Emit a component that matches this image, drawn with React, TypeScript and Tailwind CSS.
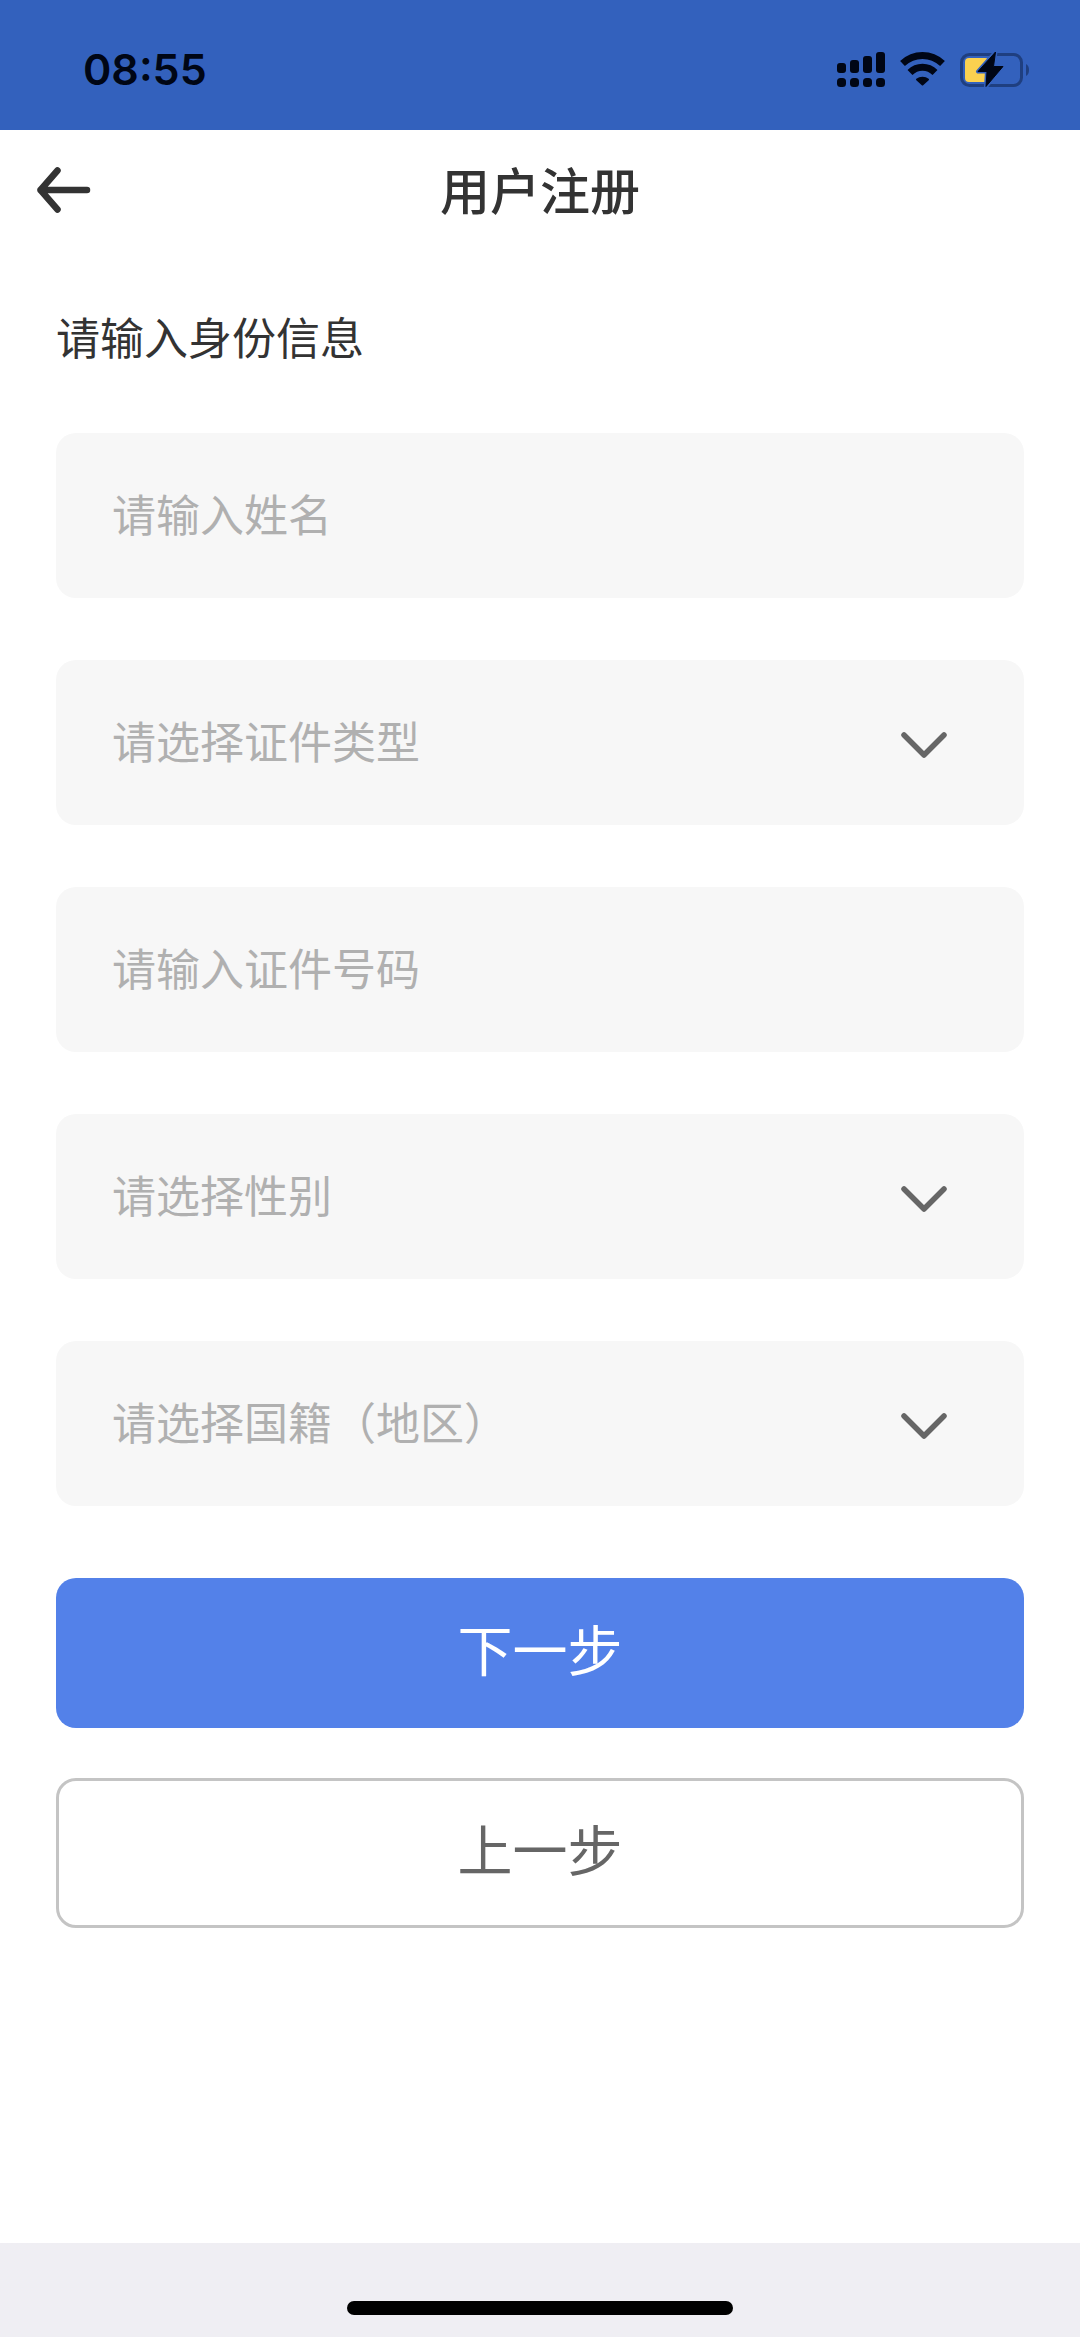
import { useState } from 'react';

type Field = {
  id: string;
  placeholder: string;
  options?: string[];
};

const fields: Field[] = [
  { id: 'name', placeholder: '请输入姓名' },
  { id: 'idType', placeholder: '请选择证件类型', options: ['身份证', '护照', '港澳居民来往内地通行证'] },
  { id: 'idNumber', placeholder: '请输入证件号码' },
  { id: 'gender', placeholder: '请选择性别', options: ['男', '女'] },
  { id: 'region', placeholder: '请选择国籍（地区）', options: ['中国', '其他'] },
];

const controlClass =
  'h-[165px] w-full appearance-none rounded-[20px] bg-[#f7f7f7] px-14 pb-1.5 text-[44px] outline-none placeholder:text-[#b0b0b0] placeholder:opacity-100';

function SignalIcon() {
  return (
    <svg width="48" height="36" viewBox="0 0 48 36" fill="#000615" aria-hidden="true">
      <rect x="0" y="12" width="9" height="10" rx="3" />
      <rect x="13" y="9" width="9" height="13" rx="3" />
      <rect x="26" y="5" width="9" height="17" rx="3" />
      <rect x="39" y="1" width="9" height="21" rx="3" />
      <rect x="0" y="27" width="9" height="9" rx="3.5" />
      <rect x="13" y="27" width="9" height="9" rx="3.5" />
      <rect x="26" y="27" width="9" height="9" rx="3.5" />
      <rect x="39" y="27" width="9" height="9" rx="3.5" />
    </svg>
  );
}

function WifiIcon() {
  return (
    <svg width="45" height="36" viewBox="0 0 45 36" fill="none" aria-hidden="true">
      <path d="M2.5 12.5C14 1.8 31 1.8 42.5 12.5" stroke="#000615" strokeWidth="7" />
      <path d="M10 21.5C17 14.5 28 14.5 35 21.5" stroke="#000615" strokeWidth="7" />
      <path
        d="M17 28.5C20 26 25 26 28 28.5L22.5 33.5Z"
        fill="#000615"
        stroke="#000615"
        strokeWidth="2"
        strokeLinejoin="round"
      />
    </svg>
  );
}

function BatteryIcon() {
  return (
    <svg width="70" height="36" viewBox="0 0 70 36" fill="none" aria-hidden="true">
      <rect x="1.5" y="3.5" width="60" height="31" rx="8" stroke="#1f3f80" strokeWidth="3" />
      <path d="M66 13c4 1.5 4 10.500 0 12z" fill="#1f3f80" />
      <rect x="5" y="7" width="24" height="24" rx="4" fill="#fbd150" />
      <path
        d="M35.500 1L18 20.500H27L26 35.500L43 15.500H33.500Z"
        fill="#3361bd"
        stroke="#3361bd"
        strokeWidth="4"
        strokeLinejoin="round"
      />
      <path
        d="M35.500 1L18 20.500H27L26 35.500L43 15.500H33.500Z"
        fill="#000615"
        stroke="#000615"
        strokeLinejoin="round"
      />
    </svg>
  );
}

export default function App() {
  const [values, setValues] = useState<Record<string, string>>({});

  const update = (id: string, value: string) => setValues((prev) => ({ ...prev, [id]: value }));

  return (
    <div className="flex min-h-screen flex-col bg-white font-['Noto_Sans_CJK_SC',sans-serif] text-[#333333]">
      {/* Status bar */}
      <div className="flex h-[130px] items-center justify-between bg-[#3361bd] pt-2 pr-[50px] pl-[83px]">
        <span className="font-['Inter',sans-serif] text-[43px] font-semibold text-[#000615]">08:55</span>
        <div className="flex items-center gap-[15px]">
          <SignalIcon />
          <WifiIcon />
          <BatteryIcon />
        </div>
      </div>

      {/* Header */}
      <header className="grid h-[120px] grid-cols-[1fr_auto_1fr] items-center px-9">
        <button type="button" aria-label="返回" className="justify-self-start">
          <svg width="56" height="48" viewBox="0 0 56 48" fill="none" aria-hidden="true">
            <path
              d="M21.5 4.5L4.5 24L21.5 43.5M4.500 24H51"
              stroke="#333333"
              strokeWidth="6.5"
              strokeLinecap="round"
              strokeLinejoin="round"
            />
          </svg>
        </button>
        <h1 className="pb-1 text-[50px] leading-[64px] font-medium">用户注册</h1>
      </header>

      <main className="flex-1 px-14 pt-[54px]">
        <h2 className="text-[44px] leading-[64px]">请输入身份信息</h2>

        <form className="mt-[65px]" onSubmit={(e) => e.preventDefault()}>
          <div className="flex flex-col gap-[62px]">
            {fields.map((field) => (
              <div key={field.id} className="relative">
                {field.options ? (
                  <>
                    <select
                      id={field.id}
                      aria-label={field.placeholder}
                      value={values[field.id] ?? ''}
                      onChange={(e) => update(field.id, e.target.value)}
                      className={`${controlClass} ${values[field.id] ? 'text-[#333333]' : 'text-[#b0b0b0]'}`}
                    >
                      <option value="">{field.placeholder}</option>
                      {field.options.map((option) => (
                        <option key={option} value={option}>
                          {option}
                        </option>
                      ))}
                    </select>
                    <svg
                      className="pointer-events-none absolute inset-y-0 right-[76px] my-auto"
                      width="48"
                      height="30"
                      viewBox="0 0 48 30"
                      fill="none"
                      aria-hidden="true"
                    >
                      <path
                        d="M4 7L24 27L44 7"
                        stroke="#666666"
                        strokeWidth="5.5"
                        strokeLinecap="round"
                        strokeLinejoin="round"
                      />
                    </svg>
                  </>
                ) : (
                  <input
                    id={field.id}
                    type="text"
                    aria-label={field.placeholder}
                    placeholder={field.placeholder}
                    value={values[field.id] ?? ''}
                    onChange={(e) => update(field.id, e.target.value)}
                    className={controlClass}
                  />
                )}
              </div>
            ))}
          </div>

          {/* Actions */}
          <div className="mt-[72px] flex flex-col gap-[50px]">
            <button type="submit" className="h-[150px] rounded-[20px] bg-[#5381e9] pb-3 text-[55px] text-white">
              下一步
            </button>
            <button
              type="button"
              className="h-[150px] rounded-[20px] border-[3px] border-[#c4c4c4] pb-3 text-[55px] text-[#666666]"
            >
              上一步
            </button>
          </div>
        </form>
      </main>

      {/* Home indicator */}
      <footer className="flex h-[94px] items-end justify-center bg-[#efeef3] pb-[22px]">
        <div className="h-3.5 w-[386px] rounded-full bg-black" />
      </footer>
    </div>
  );
}
